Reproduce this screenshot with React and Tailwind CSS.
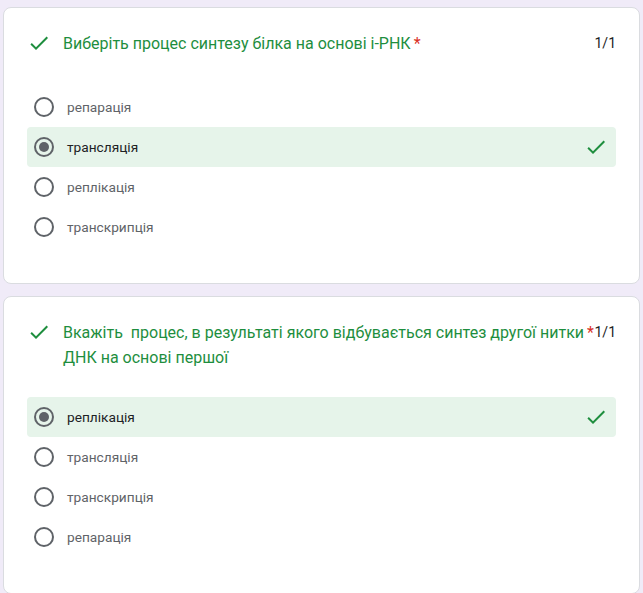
import React from "react";

const CheckIcon = ({ className = "" }) => (
  <svg viewBox="0 0 24 24" className={className} fill="currentColor">
    <path d="M9 16.17L4.83 12l-1.42 1.41L9 19 21 7l-1.41-1.41z" />
  </svg>
);

function Radio({ checked }) {
  return (
    <div className="w-5 h-5 rounded-full border-2 border-[#5f6368] flex items-center justify-center shrink-0">
      {checked && <div className="w-2.5 h-2.5 rounded-full bg-[#5f6368]" />}
    </div>
  );
}

function Option({ label, selected }) {
  return (
    <div
      className={`h-10 flex items-center pl-[7px] pr-[8px] rounded ${
        selected ? "bg-[#e6f4ea]" : ""
      }`}
    >
      <Radio checked={selected} />
      <span
        className={`ml-[13px] flex-1 text-[13.7px] ${
          selected ? "text-[#202124]" : "text-[#5f6368]"
        }`}
      >
        {label}
      </span>
      {selected && <CheckIcon className="w-6 h-6 text-[#1e8e3e]" />}
    </div>
  );
}

function QuestionCard({ title, options, answer, gap }) {
  return (
    <div className="bg-white border border-[#dadce0] rounded-lg pt-[23px] pb-[36px] pl-[23px] pr-[23px]">
      <div className="flex items-start">
        <CheckIcon className="w-6 h-6 text-[#1e8e3e] shrink-0" />
        <div className="ml-3 text-[16px] leading-[25px] text-[#1e8e3e]">{title}</div>
        <span className="text-[16px] leading-[25px] text-[#d93025] ml-[3px]">*</span>
        <div className="flex-1" />
        <span className="text-[14px] leading-[25px] text-[#202124] shrink-0">1/1</span>
      </div>
      <div className={`${gap} flex flex-col`}>
        {options.map((o) => (
          <Option key={o} label={o} selected={o === answer} />
        ))}
      </div>
    </div>
  );
}

export default function App() {
  return (
    <div
      className="w-[643px] h-[593px] overflow-hidden bg-[#f0ebf8] pt-[7px] pl-[3px] pr-[3px] flex flex-col gap-[12px]"
      style={{ fontFamily: "Roboto, 'Noto Sans', sans-serif" }}
    >
      <QuestionCard
        title="Виберіть процес синтезу білка на основі і-РНК"
        options={["репарація", "трансляція", "реплікація", "транскрипція"]}
        answer="трансляція"
        gap="mt-[31px]"
      />
      <QuestionCard
        title={
          <>
            Вкажіть&nbsp; процес, в результаті якого відбувається синтез другої нитки
            <br />
            ДНК на основі першої
          </>
        }
        options={["реплікація", "трансляція", "транскрипція", "репарація"]}
        answer="реплікація"
        gap="mt-[27px]"
      />
    </div>
  );
}
